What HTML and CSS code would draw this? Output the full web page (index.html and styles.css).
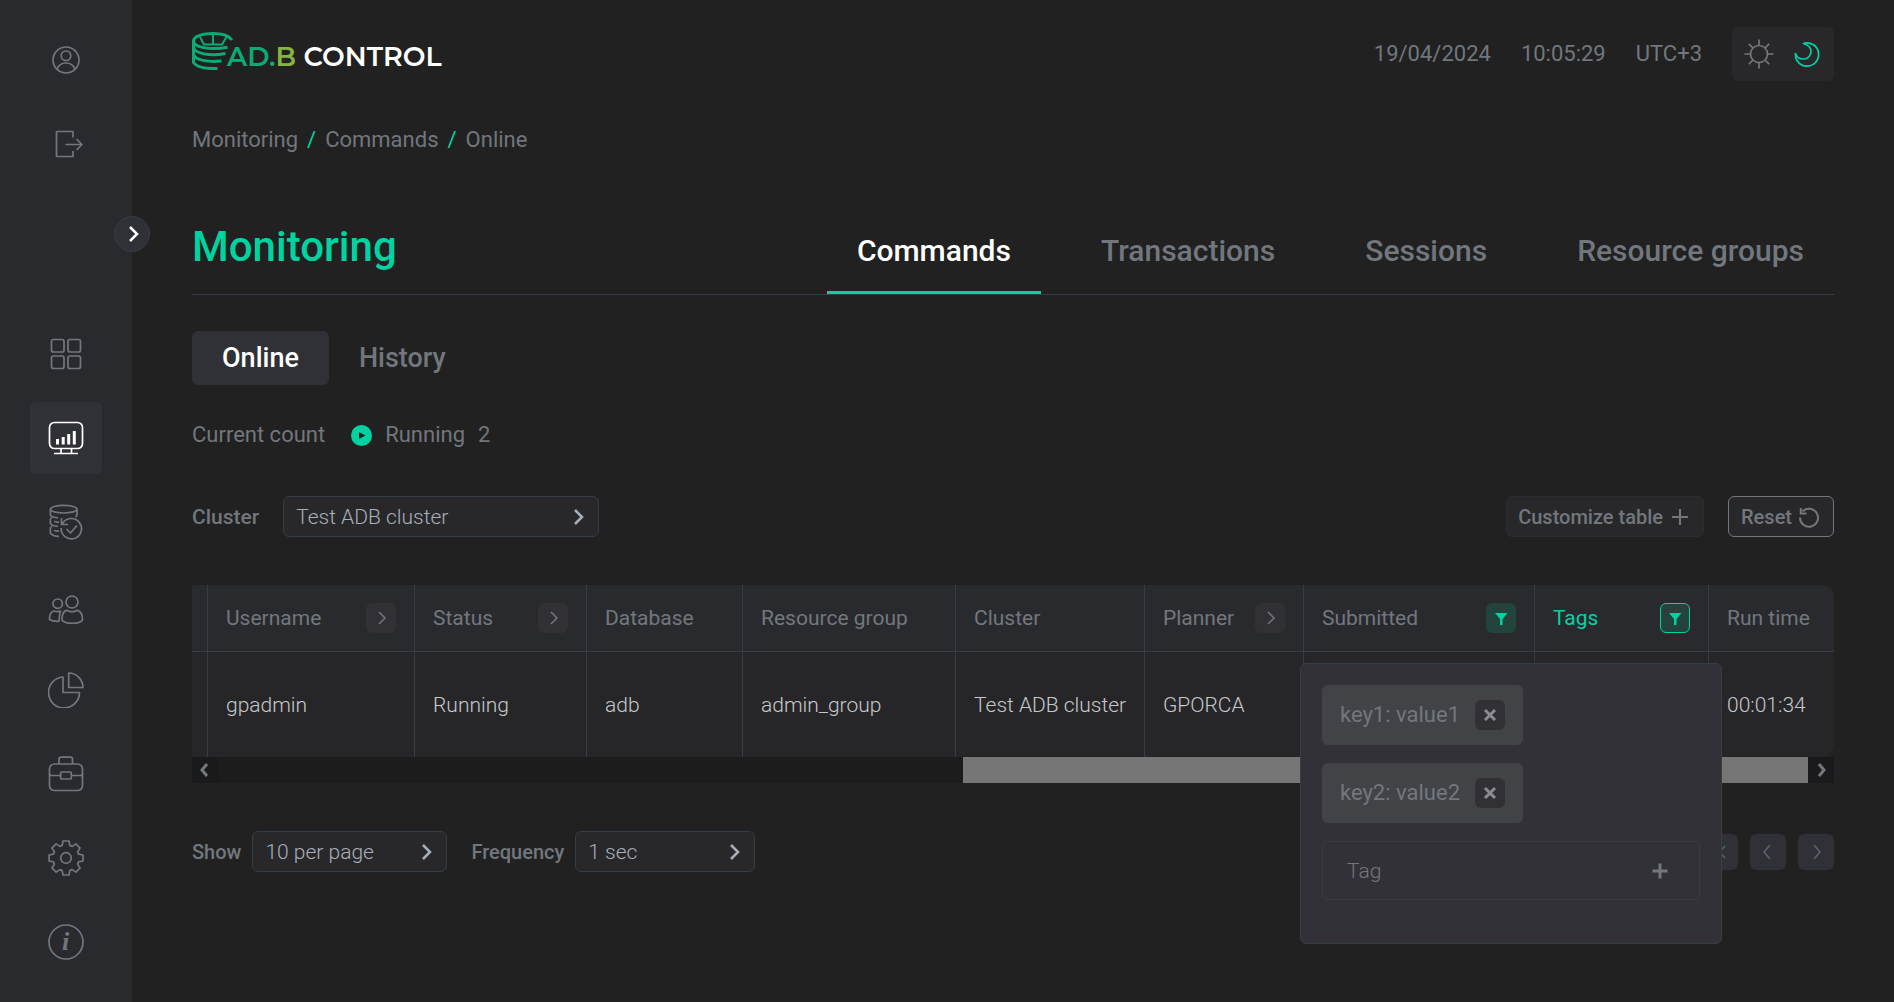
FILE: index.html
```html
<!DOCTYPE html>
<html lang="en">

<head>
    <meta charset="UTF-8">
    <meta name="viewport" content="width=device-width, initial-scale=1.0">
    <title>ADB Control - Monitoring</title>
    <link rel="stylesheet" href="styles.css">
</head>

<body>
    <div class="app">
        <aside class="sidebar">
            <nav class="side-group">
                <a class="side-item" href="#" aria-label="Profile">
                    <svg class="icon" viewBox="0 0 36 36">
                        <circle cx="18" cy="18" r="13" />
                        <circle cx="18" cy="13.8" r="4.8" />
                        <path d="M9 27.2c1.300-3.800 4.700-6.200 9-6.200s7.700 2.400 9 6.200" />
                    </svg>
                </a>
                <a class="side-item" href="#" aria-label="Log out">
                    <svg class="icon" viewBox="0 0 36 36">
                        <path d="M25 11.500V5.500H8.500v25H25V25M17.500 18.500H34M28.500 13l5.500 5.500-5.500 5.500" />
                    </svg>
                </a>
            </nav>
            <nav class="side-group">
                <a class="side-item" href="#" aria-label="Dashboard">
                    <svg class="icon" viewBox="0 0 36 36">
                        <rect x="3.500" y="3.500" width="12.500" height="12.500" rx="2" />
                        <rect x="20" y="3.500" width="12.500" height="12.500" rx="2" />
                        <rect x="3.500" y="20" width="12.500" height="12.500" rx="2" />
                        <rect x="20" y="20" width="12.500" height="12.500" rx="2" />
                    </svg>
                </a>
                <a class="side-item active" href="#" aria-label="Monitoring">
                    <svg class="icon" viewBox="0 0 36 36">
                        <rect x="1.500" y="2.500" width="33" height="26" rx="5" />
                        <path d="M13 28.500v5M23.500 28.500v5M6 33.500h24" />
                        <path class="solid" d="M8 19h3v5.500H8zM13.700 17h3v7.500h-3zM19.200 14h3v10.500h-3zM24.800 11h3v13.500h-3z" />
                    </svg>
                </a>
                <a class="side-item" href="#" aria-label="Backups">
                    <svg class="icon" viewBox="0 0 36 36">
                        <ellipse cx="15.700" cy="5.200" rx="13.300" ry="3.800" />
                        <path d="M2.400 5.200v6c1.200 1.500 3.600 2.300 7.600 2.600M29 5.200v5.500c0 1-.6 1.700-1.700 2.300" />
                        <path d="M4 13.500c-1.100.6-1.600 1-1.600 1.800v4.500c1.200 1.500 3.600 2.300 7.600 2.600" />
                        <path d="M4 22.500c-1.100.6-1.600 1-1.600 1.800v5c1.400 1.900 4.400 2.900 8.600 3.200M6 17.500l5 .8M6 26.500l5 .8" />
                        <path d="M14.500 19.500a10.200 10.200 0 1 1-1.400 4.500M13.500 14v6.500h6.500" />
                        <path d="M18.500 25l4 4 6.500-7.500" />
                    </svg>
                </a>
                <a class="side-item" href="#" aria-label="Users">
                    <svg class="icon" viewBox="0 0 36 36">
                        <circle cx="24" cy="14" r="6" />
                        <circle cx="9.700" cy="15.700" r="4.700" />
                        <path d="M18.500 22.300c3.500 2 7.500 2 11 0 3.500.8 5 3.700 5 9.700-3 4.500-17.500 4.500-20.500 0 0-6 1-8.900 4.500-9.700z" />
                        <path d="M12.500 23c-2 .8-4.500.8-6.500 0-3 .5-4.500 2.500-4.500 8.500 2.500 1.500 6 2 9.500 1.800.2-4 .5-7.500 1.500-10.300z" />
                    </svg>
                </a>
                <a class="side-item" href="#" aria-label="Reports">
                    <svg class="icon" viewBox="0 0 36 36">
                        <path d="M15 5v15.500h16.500A15.500 15.500 0 1 1 15 5z" />
                        <path d="M20.700 1v14.500H35A14.500 14.500 0 0 0 20.700 1z" />
                    </svg>
                </a>
                <a class="side-item" href="#" aria-label="Jobs">
                    <svg class="icon" viewBox="0 0 36 36">
                        <rect x="1.500" y="8" width="33" height="26.500" rx="5" />
                        <path d="M11 8V3.200c0-1.300.7-2 2-2h9.500c1.300 0 2 .7 2 2V8M1.500 17.500c0 1.300.7 2 2 2h9.200M23.300 19.500h9.200c1.300 0 2-.7 2-2" />
                        <rect x="12.700" y="16" width="10.600" height="7" rx="1" />
                    </svg>
                </a>
                <a class="side-item" href="#" aria-label="Settings">
                    <svg class="icon" viewBox="-18 -18 36 36">
                        <path d="M-3-17L3-17 3.800-12.600 6.200-11.600 9.900-14.100 14.100-9.900 11.600-6.200 12.600-3.800 17-3 17 3 12.600 3.800 11.600 6.200 14.100 9.900 9.900 14.100 6.200 11.600 3.800 12.600 3 17-3 17-3.800 12.600-6.200 11.600-9.900 14.100-14.100 9.900-11.600 6.200-12.600 3.800-17 3-17-3-12.600-3.800-11.600-6.200-14.100-9.900-9.900-14.100-6.200-11.600-3.800-12.600z" />
                        <circle r="5.300" />
                    </svg>
                </a>
                <a class="side-item" href="#" aria-label="Information">
                    <svg class="icon" viewBox="0 0 36 36">
                        <circle cx="18" cy="18" r="17" />
                        <text class="info-letter" x="14" y="26">i</text>
                    </svg>
                </a>
            </nav>
            <button class="side-toggle" type="button" aria-label="Expand menu">
                <svg class="icon-chevron" viewBox="0 0 18 18"><path d="M7 2l7 7-7 7" /></svg>
            </button>
        </aside>

        <main class="content">
            <header class="top">
                <a class="logo" href="#">
                    <svg class="logo-mark" viewBox="0 0 42 38">
                        <path d="M40 8C37 3.500 30 1.500 21 1.500 10 1.500 1.500 4.500 1.500 9v21.500C4 34.500 12 37 25.500 36.500" />
                        <path d="M1.500 9c0 6 16 9.500 34 6.300M1.500 15.500c1.500 6 16 9 32 6M1.500 22.500c2 5.500 14 8 28 6.500" />
                        <path class="thin" d="M8 5l4 7.500h18L34.500 5M21 2v10" />
                    </svg>
                    <span class="logo-text"><span class="logo-ad">AD.</span><span class="logo-b">B</span> CONTROL</span>
                </a>
                <div class="clock">
                    <span>19/04/2024</span>
                    <span>10:05:29</span>
                    <span>UTC+3</span>
                </div>
                <div class="theme">
                    <button type="button" aria-label="Light theme">
                        <svg class="icon" viewBox="0 0 36 36">
                            <circle cx="18" cy="18" r="8.500" />
                            <path d="M18 3.500v6M18 26.500v6M3.500 18h6M26.500 18h6M7.800 7.800l4.200 4.200M24 24l4.200 4.200M28.200 7.800L24 12M12 24l-4.200 4.200" />
                        </svg>
                    </button>
                    <button type="button" class="on" aria-label="Dark theme">
                        <svg class="icon" viewBox="0 0 36 36">
                            <path d="M14.500 7.500A11.600 11.600 0 1 1 6.500 17.500a8 8 0 0 0 8 5.500 7.500 7.500 0 0 0 5.500-12.500c-1.500-1.500-3-2.200-5.500-3z" />
                        </svg>
                    </button>
                </div>
            </header>

            <nav class="breadcrumbs">
                <a href="#">Monitoring</a><span>/</span><a href="#">Commands</a><span>/</span><a href="#">Online</a>
            </nav>

            <div class="title-row">
                <h1>Monitoring</h1>
                <nav class="tabs">
                    <a class="active" href="#">Commands</a>
                    <a href="#">Transactions</a>
                    <a href="#">Sessions</a>
                    <a href="#">Resource groups</a>
                </nav>
            </div>

            <nav class="subtabs">
                <a class="active" href="#">Online</a>
                <a href="#">History</a>
            </nav>

            <div class="counts">
                <span>Current count</span>
                <svg class="play" viewBox="0 0 21 21"><circle cx="10.500" cy="10.500" r="10.500" /><path d="M8 7v7l6.500-3.500z" /></svg>
                <span>Running</span>
                <span>2</span>
            </div>

            <div class="toolbar">
                <label for="cluster">Cluster</label>
                <div class="select select-cluster">
                    <select id="cluster">
                        <option>Test ADB cluster</option>
                    </select>
                    <svg class="icon-chevron" viewBox="0 0 18 18"><path d="M6 2l7 7-7 7" /></svg>
                </div>
                <button class="btn" type="button">Customize table
                    <svg viewBox="-2 -2 24 24"><path d="M10 2v16M2 10h16" /></svg>
                </button>
                <button class="btn btn-reset" type="button">Reset
                    <svg viewBox="-2 -2 24 24"><path d="M3.500 4.500A9 9 0 1 1 1 10.500M1.800 1v5.500h5.700" /></svg>
                </button>
            </div>

            <table class="commands">
                <thead>
                    <tr>
                        <th class="col-cut"></th>
                        <th class="col-username">
                            <div class="th">Username <button class="filter" type="button" aria-label="Filter by username"><svg viewBox="0 0 18 18"><path d="M7 3l6 6-6 6" /></svg></button></div>
                        </th>
                        <th class="col-status">
                            <div class="th">Status <button class="filter" type="button" aria-label="Filter by status"><svg viewBox="0 0 18 18"><path d="M7 3l6 6-6 6" /></svg></button></div>
                        </th>
                        <th class="col-database">Database</th>
                        <th class="col-group">Resource group</th>
                        <th class="col-cluster">Cluster</th>
                        <th class="col-planner">
                            <div class="th">Planner <button class="filter" type="button" aria-label="Filter by planner"><svg viewBox="0 0 18 18"><path d="M7 3l6 6-6 6" /></svg></button></div>
                        </th>
                        <th class="col-submitted">
                            <div class="th">Submitted <button class="filter filter-set" type="button" aria-label="Filter by submit time"><svg viewBox="0 0 18 18"><path d="M3 4h12.500l-5 6v6H8v-6z" /></svg></button></div>
                        </th>
                        <th class="col-tags">
                            <div class="th">Tags <button class="filter filter-set filter-open" type="button" aria-label="Filter by tags"><svg viewBox="0 0 18 18"><path d="M3 4h12.500l-5 6v6H8v-6z" /></svg></button></div>
                            <div class="tag-filter">
                                <div class="chip">key1: value1
                                    <button type="button" aria-label="Remove key1"><svg viewBox="0 0 18 18"><path d="M4 4l10 10M14 4L4 14" /></svg></button>
                                </div>
                                <div class="chip">key2: value2
                                    <button type="button" aria-label="Remove key2"><svg viewBox="0 0 18 18"><path d="M4 4l10 10M14 4L4 14" /></svg></button>
                                </div>
                                <div class="tag-input">
                                    <input type="text" placeholder="Tag" aria-label="Tag">
                                    <button type="button" aria-label="Add tag"><svg viewBox="0 0 18 18"><path d="M9 1.500v15M1.500 9h15" /></svg></button>
                                </div>
                            </div>
                        </th>
                        <th class="col-runtime">Run time</th>
                    </tr>
                </thead>
                <tbody>
                    <tr>
                        <td></td>
                        <td>gpadmin</td>
                        <td>Running</td>
                        <td>adb</td>
                        <td>admin_group</td>
                        <td>Test ADB cluster</td>
                        <td>GPORCA</td>
                        <td></td>
                        <td></td>
                        <td>00:01:34</td>
                    </tr>
                </tbody>
            </table>
            <div class="scrollbar">
                <button type="button" aria-label="Scroll left"><svg viewBox="0 0 14 14"><path d="M9 1L4 7l5 6" /></svg></button>
                <div class="scroll-track">
                    <div class="scroll-thumb"></div>
                </div>
                <button type="button" aria-label="Scroll right"><svg viewBox="0 0 14 14"><path d="M5 1l5 6-5 6" /></svg></button>
            </div>

            <footer class="table-footer">
                <label for="per-page">Show</label>
                <div class="select select-page">
                    <select id="per-page">
                        <option>10 per page</option>
                    </select>
                    <svg class="icon-chevron" viewBox="0 0 18 18"><path d="M6 2l7 7-7 7" /></svg>
                </div>
                <label for="frequency">Frequency</label>
                <div class="select select-frequency">
                    <select id="frequency">
                        <option>1 sec</option>
                    </select>
                    <svg class="icon-chevron" viewBox="0 0 18 18"><path d="M6 2l7 7-7 7" /></svg>
                </div>
                <div class="pager">
                    <button type="button" aria-label="First page"><svg viewBox="0 0 18 18"><path d="M8 3L2 9l6 6M14 3L8 9l6 6" /></svg></button>
                    <button type="button" aria-label="Previous page"><svg viewBox="0 0 18 18"><path d="M11 2L5 9l6 7" /></svg></button>
                    <button type="button" aria-label="Next page"><svg viewBox="0 0 18 18"><path d="M7 2l6 7-6 7" /></svg></button>
                </div>
            </footer>
        </main>
    </div>
</body>

</html>
```
FILE: styles.css
```css
:root {
    --bg: #212121;
    --panel: #292a2e;
    --raised: #303136;
    --line: #353d46;
    --muted: #72777d;
    --green: #00d3a0;
}

* {
    box-sizing: border-box;
}

body {
    margin: 0;
    background: var(--bg);
    color: var(--muted);
    font-family: Roboto, "Liberation Sans", sans-serif;
    font-size: 21px;
    line-height: 30px;
}

a {
    color: inherit;
    text-decoration: none;
}

button {
    margin: 0;
    padding: 0;
    border: 0;
    background: none;
    color: inherit;
    font: inherit;
    cursor: pointer;
}

svg {
    display: block;
    fill: none;
    stroke: currentColor;
}

.app {
    display: flex;
    min-height: 100vh;
}

/* SIDEBAR */
.sidebar {
    position: relative;
    display: flex;
    flex: 0 0 132px;
    flex-direction: column;
    justify-content: space-between;
    align-items: center;
    padding: 24px 0;
    background: var(--panel);
}

.side-group {
    display: flex;
    flex-direction: column;
    gap: 12px;
}

.side-item {
    display: flex;
    align-items: center;
    justify-content: center;
    width: 72px;
    height: 72px;
    border-radius: 6px;
}

.side-item.active {
    background: var(--raised);
    color: #fff;
}

.icon {
    width: 36px;
    height: 36px;
    stroke-width: 1.7;
    stroke-linejoin: round;
}

.icon .solid {
    fill: currentColor;
    stroke: none;
}

.info-letter {
    fill: currentColor;
    stroke: none;
    font: italic bold 26px "Liberation Serif", serif;
}

.side-toggle {
    position: absolute;
    top: 216px;
    right: -18px;
    display: flex;
    align-items: center;
    justify-content: center;
    width: 36px;
    height: 36px;
    border: 1px solid var(--line);
    border-radius: 50%;
    background: var(--raised);
    color: #fff;
}

.icon-chevron {
    width: 18px;
    height: 18px;
    stroke-width: 2.5;
}

/* HEADER */
.content {
    flex: 1;
    min-width: 0;
    padding: 27px 60px;
}

.top {
    display: flex;
    align-items: center;
    height: 54px;
}

.logo {
    display: flex;
    align-self: flex-start;
    margin-right: auto;
    padding-top: 5px;
}

.logo-mark {
    width: 42px;
    height: 38px;
    margin-right: -7px;
    color: #0cab73;
    stroke-width: 3;
}

.logo-mark .thin {
    stroke-width: 2;
}

.logo-text {
    padding-top: 8px;
    color: #fff;
    font: 600 27px/34px Montserrat, Inter, sans-serif;
}

.logo-ad {
    color: #0cab73;
}

.logo-b {
    color: #87b340;
}

.clock {
    display: flex;
    gap: 30px;
    font-size: 22px;
}

.theme {
    display: flex;
    align-items: center;
    gap: 12px;
    height: 54px;
    margin-left: 30px;
    padding: 0 9px;
    border-radius: 6px;
    background: #28282b;
}

.theme .on {
    color: var(--green);
}

.breadcrumbs {
    display: flex;
    gap: 9px;
    margin-top: 44px;
    font-size: 22px;
}

.breadcrumbs span {
    color: var(--green);
}

/* TITLE AND TABS */
.title-row {
    display: flex;
    align-items: flex-end;
    justify-content: space-between;
    margin-top: 68px;
    border-bottom: 1px solid var(--line);
}

h1 {
    margin: 0 0 23px;
    color: var(--green);
    font-size: 42px;
    font-weight: 500;
    line-height: 48px;
}

.tabs {
    display: flex;
    gap: 30px;
    font-size: 30px;
    font-weight: 500;
    line-height: 36px;
}

.tabs a {
    padding: 0 30px 22px;
    border-bottom: 3px solid transparent;
}

.tabs .active {
    border-color: var(--green);
    color: #fff;
}

.subtabs {
    display: flex;
    margin-top: 36px;
    font-size: 27px;
    font-weight: 500;
    line-height: 54px;
}

.subtabs a {
    padding: 0 30px;
    border-radius: 6px;
}

.subtabs .active {
    background: var(--raised);
    color: #fff;
}

.counts {
    display: flex;
    align-items: center;
    gap: 13px;
    margin-top: 35px;
    font-size: 22px;
}

.play {
    width: 21px;
    height: 21px;
    margin-left: 13px;
    fill: var(--green);
    stroke: none;
}

.play path {
    fill: var(--bg);
}

/* CONTROLS */
.toolbar,
.table-footer {
    display: flex;
    align-items: center;
    margin-top: 46px;
}

.toolbar label,
.table-footer label {
    font-weight: 500;
}

.select {
    position: relative;
    color: #a9afb8;
}

.select select {
    width: 100%;
    height: 41px;
    padding: 0 40px 0 12px;
    border: 1px solid var(--line);
    border-radius: 6px;
    appearance: none;
    background: #28282b;
    color: inherit;
    font: 300 21px Roboto, "Liberation Sans", sans-serif;
}

.select .icon-chevron {
    position: absolute;
    top: 12px;
    right: 12px;
    pointer-events: none;
}

.select-cluster {
    width: 316px;
    margin: 0 auto 0 24px;
}

.btn {
    display: flex;
    align-items: center;
    gap: 5px;
    height: 41px;
    padding: 0 11px;
    border: 1px solid #2c2c30;
    border-radius: 6px;
    background: #28282b;
    font-size: 20px;
    font-weight: 500;
}

.btn svg {
    width: 24px;
    height: 24px;
    stroke-width: 2;
}

.btn-reset {
    margin-left: 24px;
    padding: 0 12px;
    border-color: var(--muted);
}

/* TABLE */
.commands {
    width: 100%;
    margin-top: 48px;
    border-spacing: 0;
    table-layout: fixed;
}

.commands th,
.commands td {
    padding: 0 18px;
    border-right: 1px solid var(--line);
    text-align: left;
    white-space: nowrap;
}

.commands th {
    height: 67px;
    border-bottom: 1px solid var(--line);
    background: var(--panel);
    font-weight: 400;
}

.commands td {
    height: 105px;
    background: #262628;
    color: #c8c8ca;
    font-weight: 300;
}

.commands th:first-child,
.commands td:first-child {
    padding: 0;
}

.commands th:last-child,
.commands td:last-child {
    border-right: 0;
}

.commands th:last-child {
    border-top-right-radius: 12px;
}

.commands td:last-child {
    border-bottom-right-radius: 12px;
}

.col-cut {
    width: 16px;
}

.col-username {
    width: 207px;
}

.col-status {
    width: 172px;
}

.col-database {
    width: 156px;
}

.col-group {
    width: 213px;
}

.col-cluster {
    width: 189px;
}

.col-planner {
    width: 159px;
}

.col-submitted {
    width: 231px;
}

.col-tags {
    position: relative;
    width: 174px;
    color: var(--green);
}

.col-runtime {
    width: 125px;
}

.th {
    display: flex;
    align-items: center;
    justify-content: space-between;
}

.filter,
.chip button,
.tag-input button {
    display: flex;
    align-items: center;
    justify-content: center;
    width: 30px;
    height: 30px;
    border-radius: 6px;
    background: #313135;
}

.filter svg {
    width: 18px;
    height: 18px;
    stroke-width: 1.5;
}

.filter-set {
    background: #23433d;
    color: var(--green);
}

.filter-set svg {
    fill: currentColor;
    stroke: none;
}

.filter-open {
    border: 1px solid var(--green);
}

.tag-filter {
    position: absolute;
    top: 78px;
    right: -14px;
    z-index: 2;
    display: flex;
    flex-direction: column;
    align-items: flex-start;
    gap: 18px;
    width: 422px;
    padding: 21px 21px 43px;
    border: 1px solid var(--line);
    border-radius: 6px;
    background: #323137;
    color: var(--muted);
}

.chip {
    display: flex;
    align-items: center;
    gap: 15px;
    height: 60px;
    padding: 0 18px;
    border-radius: 6px;
    background: #424347;
    font-size: 22px;
}

.chip svg,
.tag-input svg {
    width: 18px;
    height: 18px;
    stroke-width: 3;
}

.chip button svg {
    color: #8a8c92;
}

.tag-input {
    display: flex;
    align-items: center;
    width: 100%;
    height: 59px;
    padding: 0 24px;
    border: 1px solid #393d43;
    border-radius: 6px;
}

.tag-input input {
    flex: 1;
    min-width: 0;
    padding: 0;
    border: 0;
    outline: 0;
    background: none;
    color: inherit;
    font: 300 21px Roboto, "Liberation Sans", sans-serif;
}

.tag-input input::placeholder {
    color: var(--muted);
}

.tag-input button {
    background: none;
}

.scrollbar {
    display: flex;
    height: 26px;
    background: #1c1c1c;
}

.scrollbar button {
    display: flex;
    align-items: center;
    justify-content: center;
    width: 26px;
    background: #1a1a1c;
}

.scrollbar svg {
    width: 14px;
    height: 14px;
    stroke-width: 3;
}

.scroll-track {
    display: flex;
    flex: 1;
    justify-content: flex-end;
}

.scroll-thumb {
    width: 53.15%;
    background: #767676;
}

/* FOOTER */
.table-footer {
    margin-top: 48px;
}

.table-footer label {
    font-size: 20px;
}

.select-page {
    width: 195px;
    margin: 0 24px 0 11px;
}

.select-frequency {
    width: 180px;
    margin-left: 11px;
}

.pager {
    display: flex;
    gap: 12px;
    margin-left: auto;
}

.pager button {
    display: flex;
    align-items: center;
    justify-content: center;
    width: 36px;
    height: 36px;
    border-radius: 6px;
    background: var(--raised);
}

.pager svg {
    width: 18px;
    height: 18px;
    color: #566170;
    stroke-width: 1.7;
}
```
